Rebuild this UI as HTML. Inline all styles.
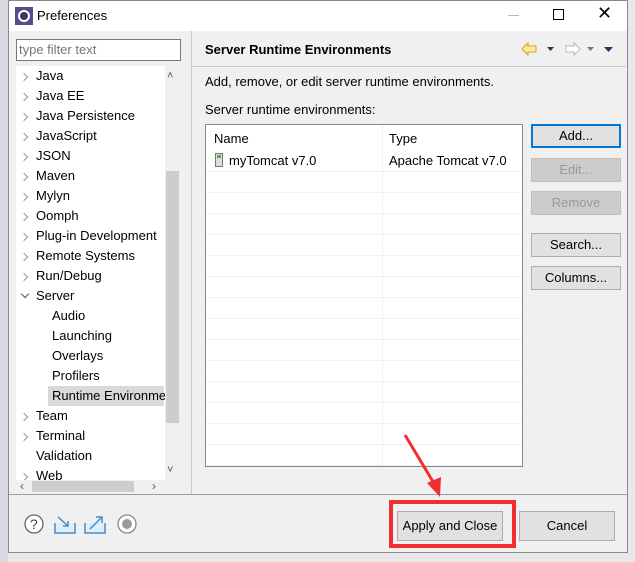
<!DOCTYPE html><html><head><style>
body{margin:0;width:635px;height:562px;position:relative;overflow:hidden;background:#e8e8ea;font-family:"Liberation Sans",sans-serif;font-size:13px;color:#000}
.a{position:absolute}
.t{position:absolute;white-space:nowrap;line-height:16px}
.btn{position:absolute;background:#e1e1e1;border:1px solid #adadad;box-sizing:border-box;text-align:center;line-height:22px}
.dis{color:#9a9a9a;background:#cccccc;border-color:#bfbfbf}
.chev{position:absolute;width:5px;height:5px;border-right:1.5px solid #999;border-top:1.5px solid #999;transform:rotate(45deg)}
</style></head><body>
<div class="a" style="left:0;top:0;width:8px;height:562px;background:#d6d9e0"></div>
<div class="a" style="left:8px;top:0;width:620px;height:553px;background:#f0f0f0;border:1px solid #8a8a8a;box-sizing:border-box"></div>
<div class="a" style="left:9px;top:1px;width:618px;height:30px;background:#fff"></div>
<svg class="a" style="left:15px;top:7px" width="18" height="18"><rect width="18" height="18" fill="#5a4a8a"/><circle cx="9" cy="9" r="6" fill="#fff"/><circle cx="9" cy="9" r="4" fill="#3a3a5a"/></svg>
<div class="t" style="left:37px;top:8px;font-size:13px">Preferences</div>
<div class="a" style="left:508px;top:15px;width:11px;height:1px;background:#bbb"></div>
<div class="a" style="left:553px;top:9px;width:9px;height:9px;border:1px solid #000"></div>
<div class="t" style="left:597px;top:5px;font-size:18px">✕</div>
<!-- filter -->
<div class="a" style="left:16px;top:39px;width:165px;height:22px;border:1px solid #7a7a7a;background:#fff;box-sizing:border-box"></div>
<div class="t" style="left:19px;top:42px;color:#777">type filter text</div>
<!-- tree -->
<div class="a" style="left:16px;top:66px;width:149px;height:414px;background:#fff"></div>
<div class="a" style="left:165px;top:66px;width:15px;height:414px;background:#f0f0f0"></div>
<div class="a" style="left:166px;top:171px;width:13px;height:252px;background:#cdcdcd"></div>
<div class="t" style="left:167px;top:68px;font-size:11px;color:#555">˄</div>
<div class="t" style="left:167px;top:462px;font-size:11px;color:#555">˅</div>
<div class="a" style="left:16px;top:480px;width:164px;height:13px;background:#f0f0f0"></div>
<div class="a" style="left:32px;top:481px;width:102px;height:11px;background:#cdcdcd"></div>
<div class="t" style="left:20px;top:478px;font-size:12px;color:#555">‹</div>
<div class="t" style="left:152px;top:478px;font-size:12px;color:#555">›</div>
<div class="a" style="left:48px;top:386px;width:116px;height:20px;background:#d9d9d9"></div>
<div class="a" style="left:16px;top:66px;width:149px;height:414px;overflow:hidden">
<div class="chev" style="left:5px;top:8px"></div><div class="t" style="left:20px;top:2px">Java</div>
<div class="chev" style="left:5px;top:28px"></div><div class="t" style="left:20px;top:22px">Java EE</div>
<div class="chev" style="left:5px;top:48px"></div><div class="t" style="left:20px;top:42px">Java Persistence</div>
<div class="chev" style="left:5px;top:68px"></div><div class="t" style="left:20px;top:62px">JavaScript</div>
<div class="chev" style="left:5px;top:88px"></div><div class="t" style="left:20px;top:82px">JSON</div>
<div class="chev" style="left:5px;top:108px"></div><div class="t" style="left:20px;top:102px">Maven</div>
<div class="chev" style="left:5px;top:128px"></div><div class="t" style="left:20px;top:122px">Mylyn</div>
<div class="chev" style="left:5px;top:148px"></div><div class="t" style="left:20px;top:142px">Oomph</div>
<div class="chev" style="left:5px;top:168px"></div><div class="t" style="left:20px;top:162px">Plug-in Development</div>
<div class="chev" style="left:5px;top:188px"></div><div class="t" style="left:20px;top:182px">Remote Systems</div>
<div class="chev" style="left:5px;top:208px"></div><div class="t" style="left:20px;top:202px">Run/Debug</div>
<div class="chev" style="left:6px;top:225px;transform:rotate(135deg);border-color:#555"></div><div class="t" style="left:20px;top:222px">Server</div>
<div class="t" style="left:36px;top:242px">Audio</div>
<div class="t" style="left:36px;top:262px">Launching</div>
<div class="t" style="left:36px;top:282px">Overlays</div>
<div class="t" style="left:36px;top:302px">Profilers</div>
<div class="t" style="left:36px;top:322px">Runtime Environments</div>
<div class="chev" style="left:5px;top:348px"></div><div class="t" style="left:20px;top:342px">Team</div>
<div class="chev" style="left:5px;top:368px"></div><div class="t" style="left:20px;top:362px">Terminal</div>
<div class="t" style="left:20px;top:382px">Validation</div>
<div class="chev" style="left:5px;top:408px"></div><div class="t" style="left:20px;top:402px">Web</div>
</div>
<div class="a" style="left:191px;top:31px;width:1px;height:463px;background:#c8c8c8"></div>
<!-- right -->
<div class="a" style="left:192px;top:66px;width:434px;height:1px;background:#c8c8c8"></div>
<div class="t" style="left:205px;top:42px;font-weight:bold">Server Runtime Environments</div>
<svg class="a" style="left:520px;top:40px" width="100" height="18"><path d="M2 9 L8 3 V6 H16 V12 H8 V15 Z" fill="#fde9a0" stroke="#d9a020"/><path d="M27 7 h7 l-3.5 4z" fill="#333"/><path d="M60 9 L54 3 V6 H46 V12 H54 V15 Z" fill="#fff" stroke="#bbb"/><path d="M67 7 h7 l-3.5 4z" fill="#777"/><path d="M84 7 h9 l-4.5 5z" fill="#3a2a6a"/></svg>
<div class="t" style="left:205px;top:74px">Add, remove, or edit server runtime environments.</div>
<div class="t" style="left:205px;top:102px">Server runtime environments:</div>
<div class="a" style="left:205px;top:124px;width:318px;height:343px;background:#fff;border:1px solid #828790;box-sizing:border-box;overflow:hidden">
<div class="a" style="left:176px;top:0;width:1px;height:343px;background:#eef0f3"></div>
<div class="a" style="left:0;top:24px;width:318px;height:18px;"></div>
<div class="t" style="left:8px;top:6px">Name</div><div class="t" style="left:183px;top:6px">Type</div>
<svg class="a" style="left:9px;top:28px" width="8" height="14"><rect x="0.5" y="0.5" width="7" height="13" fill="#ddd" stroke="#777"/><rect x="2" y="2" width="4" height="3" fill="#5a5"/></svg>
<div class="t" style="left:23px;top:28px">myTomcat v7.0</div><div class="t" style="left:183px;top:28px">Apache Tomcat v7.0</div>
<div style="position:absolute;left:0;top:46px;width:318px;height:300px;background:repeating-linear-gradient(#eef0f3 0 1px,transparent 1px 21px)"></div>
</div>
<div class="btn" style="left:531px;top:124px;width:90px;height:24px;border:2px solid #0078d7;line-height:20px">Add...</div>
<div class="btn dis" style="left:531px;top:158px;width:90px;height:24px">Edit...</div>
<div class="btn dis" style="left:531px;top:191px;width:90px;height:24px">Remove</div>
<div class="btn" style="left:531px;top:233px;width:90px;height:24px">Search...</div>
<div class="btn" style="left:531px;top:266px;width:90px;height:24px">Columns...</div>
<!-- bottom -->
<div class="a" style="left:9px;top:494px;width:618px;height:1px;background:#a0a0a0"></div>
<svg class="a" style="left:22px;top:513px" width="120" height="24"><circle cx="12" cy="11" r="9" fill="#fff" stroke="#666" stroke-width="1.3"/><text x="8" y="16" font-size="14" font-family="Liberation Sans" fill="#444">?</text><path d="M33 10 v10 h20 v-10" fill="#e0eef8" stroke="#4a8ac0" stroke-width="1.5"/><path d="M36 4 l10 9 M46 8 v5 h-5" fill="none" stroke="#4a8ac0" stroke-width="1.5"/><path d="M63 10 v10 h20 v-10" fill="#e0eef8" stroke="#4a8ac0" stroke-width="1.5"/><path d="M68 16 l12 -12 M74 4 h6 v6" fill="none" stroke="#4a8ac0" stroke-width="1.5"/><circle cx="105" cy="11" r="9" fill="#fff" stroke="#888" stroke-width="1.3"/><circle cx="105" cy="11" r="5" fill="#999"/></svg>
<div class="btn" style="left:397px;top:511px;width:106px;height:30px;line-height:28px">Apply and Close</div>
<div class="btn" style="left:519px;top:511px;width:96px;height:30px;line-height:28px">Cancel</div>
<div class="a" style="left:389px;top:500px;width:127px;height:48px;border:4px solid #f03030;box-sizing:border-box"></div>
<svg class="a" style="left:395px;top:425px" width="60" height="80"><path d="M10 10 L40 60" stroke="#f03030" stroke-width="3"/><path d="M32 58 L45 72 L46 52 Z" fill="#f03030"/></svg>
</body></html>
